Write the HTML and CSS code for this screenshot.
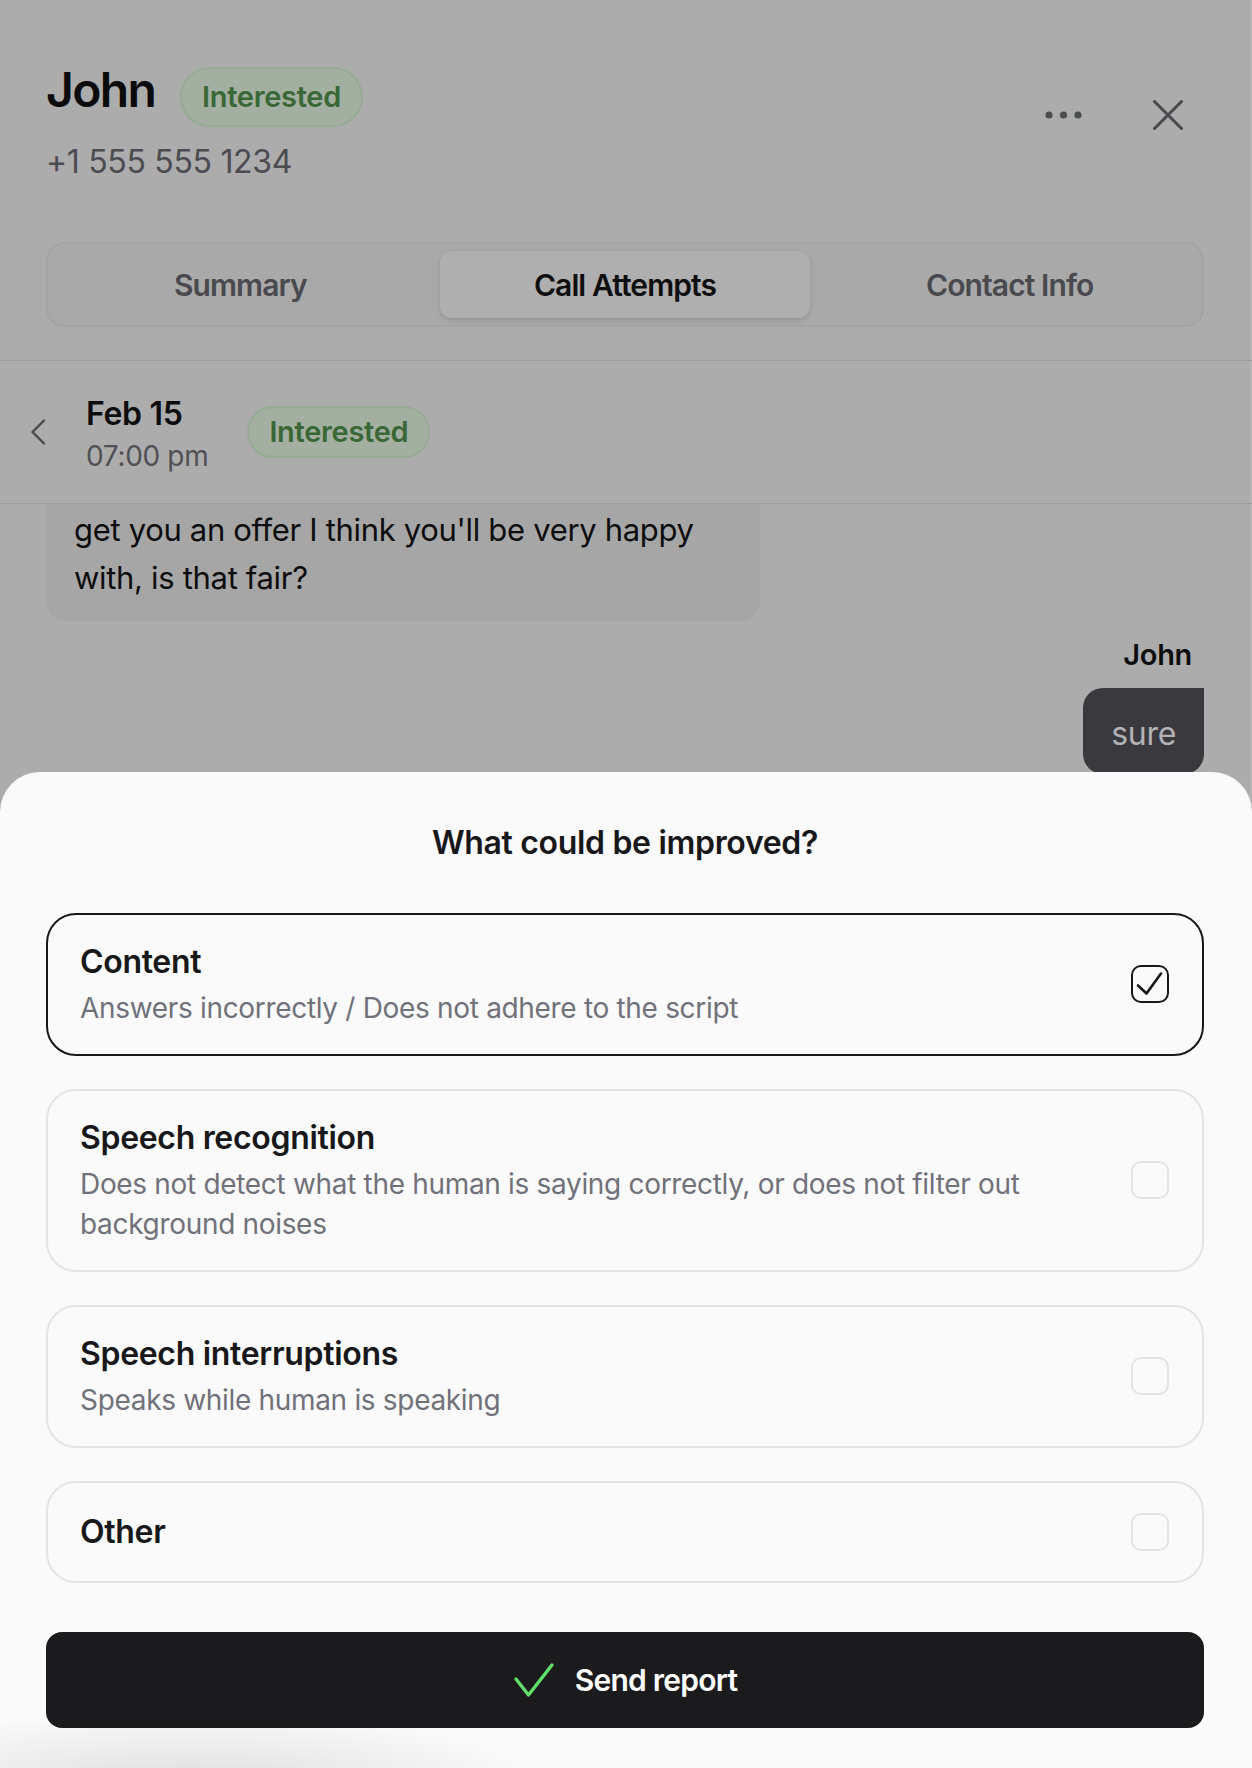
FILE: index.html
```html
<!DOCTYPE html>
<html lang="en">
<head>
<meta charset="utf-8">
<title>John – Call Attempts</title>
<link rel="stylesheet" href="styles.css">
</head>
<body>
<div class="app">
  <header class="contact">
    <div class="contact-main">
      <div class="name-row">
        <h1 class="name">John</h1>
        <span class="badge">Interested</span>
      </div>
      <div class="phone">+1 555 555 1234</div>
    </div>
    <div class="actions">
      <button class="icon-btn" aria-label="More">
        <svg width="37" height="10" viewBox="0 0 37 10"><circle cx="4" cy="5" r="3.6" fill="#4a4f4d"/><circle cx="18.5" cy="5" r="3.6" fill="#4a4f4d"/><circle cx="33" cy="5" r="3.6" fill="#4a4f4d"/></svg>
      </button>
      <button class="icon-btn" aria-label="Close">
        <svg width="30" height="30" viewBox="0 0 30 30"><path d="M1.5 1.5 L28.5 28.5 M28.5 1.5 L1.5 28.5" stroke="#48484e" stroke-width="3" stroke-linecap="round" fill="none"/></svg>
      </button>
    </div>
  </header>

  <nav class="tabs">
    <div class="tab">Summary</div>
    <div class="tab active">Call Attempts</div>
    <div class="tab">Contact Info</div>
  </nav>

  <section class="attempt">
    <div class="attempt-head">
      <svg class="chevron" width="16" height="26" viewBox="0 0 16 26"><polyline points="14,1.5 2.5,13 14,24.5" fill="none" stroke="#4a4a4f" stroke-width="2.4" stroke-linecap="round" stroke-linejoin="round"/></svg>
      <div class="when">
        <div class="date">Feb 15</div>
        <div class="time">07:00 pm</div>
      </div>
      <span class="badge badge-sm">Interested</span>
    </div>
    <div class="messages">
      <div class="thread">
        <div class="bubble agent"><span class="line">get you an offer I think you'll be very happy</span><span class="line">with, is that fair?</span></div>
        <div class="speaker">John</div>
        <div class="bubble user">sure</div>
      </div>
    </div>
  </section>

  <div class="sheet">
    <h2 class="sheet-title">What could be improved?</h2>
    <div class="options">
      <div class="option selected">
        <div class="option-text">
          <div class="option-title">Content</div>
          <div class="option-desc">Answers incorrectly / Does not adhere to the script</div>
        </div>
        <span class="checkbox checked">
          <svg width="34" height="34" viewBox="0 0 34 34"><polyline points="5,18.5 13.5,26.5 28,6.5" fill="none" stroke="#18181b" stroke-width="2.6" stroke-linecap="round" stroke-linejoin="round"/></svg>
        </span>
      </div>
      <div class="option">
        <div class="option-text">
          <div class="option-title">Speech recognition</div>
          <div class="option-desc">Does not detect what the human is saying correctly, or does not filter out background noises</div>
        </div>
        <span class="checkbox"></span>
      </div>
      <div class="option">
        <div class="option-text">
          <div class="option-title">Speech interruptions</div>
          <div class="option-desc">Speaks while human is speaking</div>
        </div>
        <span class="checkbox"></span>
      </div>
      <div class="option option-other">
        <div class="option-text">
          <div class="option-title">Other</div>
        </div>
        <span class="checkbox"></span>
      </div>
    </div>
    <button class="send">
      <svg width="42" height="36" viewBox="0 0 42 36"><polyline points="3,17 15.5,33 39,3" fill="none" stroke="#5fe06b" stroke-width="3.4" stroke-linecap="round" stroke-linejoin="round"/></svg>
      <span>Send report</span>
    </button>
  </div>
</div>
</body>
</html>
```

FILE: styles.css
```css
* { box-sizing: border-box; }

html, body {
  margin: 0;
  padding: 0;
}

body {
  width: 1252px;
  height: 1768px;
  overflow: hidden;
  background: #acacac;
  font-family: Inter, "Liberation Sans", sans-serif;
  letter-spacing: -0.02em;
  color: #0d0d0e;
}

.app {
  position: relative;
  width: 1252px;
  height: 1768px;
  overflow: hidden;
  background: #acacac;
  box-shadow: inset -2px 0 0 #b5b5b5;
}

/* ---------- contact header ---------- */
.contact {
  display: flex;
  justify-content: space-between;
  align-items: flex-start;
  padding: 61px 69px 0 46px;
}

.name-row {
  display: flex;
  align-items: baseline;
  gap: 25px;
}

.name {
  margin: 0;
  font-size: 48px;
  line-height: 58px;
  font-weight: 600;
  letter-spacing: -0.035em;
  color: #0b0b0c;
}

.badge {
  display: inline-block;
  padding: 10px 20px;
  border: 2px solid #96ab93;
  border-radius: 999px;
  background: #a3b0a1;
  color: #3a6736;
  font-size: 29px;
  line-height: 36px;
  font-weight: 600;
}

.badge-sm {
  padding: 6px 20px;
}

.phone {
  margin-top: 15px;
  font-size: 32px;
  line-height: 40px;
  color: #4b4b50;
}

.actions {
  display: flex;
  align-items: center;
  gap: 71px;
  margin-top: 39px;
}

.icon-btn {
  display: flex;
  align-items: center;
  justify-content: center;
  padding: 0;
  border: 0;
  background: none;
}

/* ---------- tabs ---------- */
.tabs {
  display: grid;
  grid-template-columns: repeat(3, 1fr);
  gap: 14px;
  height: 85px;
  margin: 60px 48px 0 46px;
  padding: 7px;
  border: 2px solid #a4a4a4;
  border-radius: 18px;
  background: #a9a9a9;
}

.tab {
  display: flex;
  align-items: center;
  justify-content: center;
  border-radius: 12px;
  font-size: 30px;
  font-weight: 600;
  letter-spacing: -0.03em;
  color: #49494e;
}

.tab.active {
  background: #afafaf;
  color: #0e0e0f;
  box-shadow: 0 2px 5px rgba(0, 0, 0, 0.13);
}

/* ---------- attempt ---------- */
.attempt {
  margin-top: 33px;
  border-top: 1px solid #9e9e9e;
}

.attempt-head {
  display: flex;
  align-items: center;
  height: 143px;
  padding-left: 30px;
  border-bottom: 1px solid #9e9e9e;
}

.chevron {
  margin-right: 40px;
}

.when {
  display: flex;
  flex-direction: column;
  gap: 4px;
  margin: 4px 39px 0 0;
}

.date {
  font-size: 32px;
  line-height: 40px;
  font-weight: 600;
  color: #0d0d0e;
}

.time {
  font-size: 28px;
  line-height: 36px;
  color: #505055;
}

.messages {
  height: 400px;
  overflow: hidden;
}

.thread {
  display: flex;
  flex-direction: column;
  margin-top: -16px;
  padding: 0 48px 0 46px;
}

.bubble {
  font-size: 31px;
  line-height: 48px;
}

.line {
  display: block;
  white-space: nowrap;
}

.bubble.agent {
  align-self: flex-start;
  width: 714px;
  padding: 18px 28px 19px;
  border-radius: 20px;
  background: #a6a6a6;
  color: #0d0d0e;
}

.speaker {
  align-self: flex-end;
  margin: 14px 12px 13px 0;
  font-size: 29px;
  line-height: 40px;
  font-weight: 600;
  color: #0d0d0e;
}

.bubble.user {
  align-self: flex-end;
  padding: 22px 28px 16px;
  font-size: 32px;
  border-radius: 20px 0 20px 20px;
  background: #3a393e;
  color: #b3b3b7;
}

/* ---------- bottom sheet ---------- */
.sheet {
  position: absolute;
  left: 0;
  right: 0;
  bottom: 0;
  padding: 51px 48px 40px 46px;
  border-radius: 40px 40px 0 0;
  background: #fafafa;
  overflow: hidden;
}

.sheet::after {
  content: "";
  position: absolute;
  left: -60px;
  bottom: -30px;
  width: 620px;
  height: 90px;
  background: radial-gradient(ellipse at 40% 100%, rgba(0, 0, 0, 0.13), rgba(0, 0, 0, 0) 70%);
  pointer-events: none;
}

.sheet-title {
  margin: 0 0 50px;
  text-align: center;
  font-size: 32px;
  line-height: 40px;
  font-weight: 600;
  color: #18181b;
}

.options {
  display: flex;
  flex-direction: column;
  gap: 33px;
}

.option {
  display: flex;
  align-items: center;
  justify-content: space-between;
  gap: 40px;
  padding: 25px 33px 26px 32px;
  border: 2px solid #e4e4e7;
  border-radius: 30px;
  background: #fafafa;
}

.option.selected {
  border-color: #18181b;
}

.option-other {
  padding-top: 27px;
  padding-bottom: 27px;
}

.option-text {
  flex: 1;
}

.option-title {
  font-size: 32px;
  line-height: 44px;
  font-weight: 600;
  color: #18181b;
}

.option-desc {
  margin-top: 4px;
  font-size: 28px;
  line-height: 40px;
  color: #71717a;
}

.checkbox {
  flex: none;
  width: 38px;
  height: 38px;
  border: 2px solid #e4e4e7;
  border-radius: 10px;
  display: flex;
  align-items: center;
  justify-content: center;
}

.checkbox.checked {
  border-color: #18181b;
}

.send {
  display: flex;
  align-items: center;
  justify-content: center;
  gap: 20px;
  width: 100%;
  height: 96px;
  margin-top: 49px;
  border: 0;
  border-radius: 16px;
  background: #1b1b1d;
  color: #ffffff;
  font-family: inherit;
  font-size: 30px;
  font-weight: 600;
  letter-spacing: -0.025em;
}
```
